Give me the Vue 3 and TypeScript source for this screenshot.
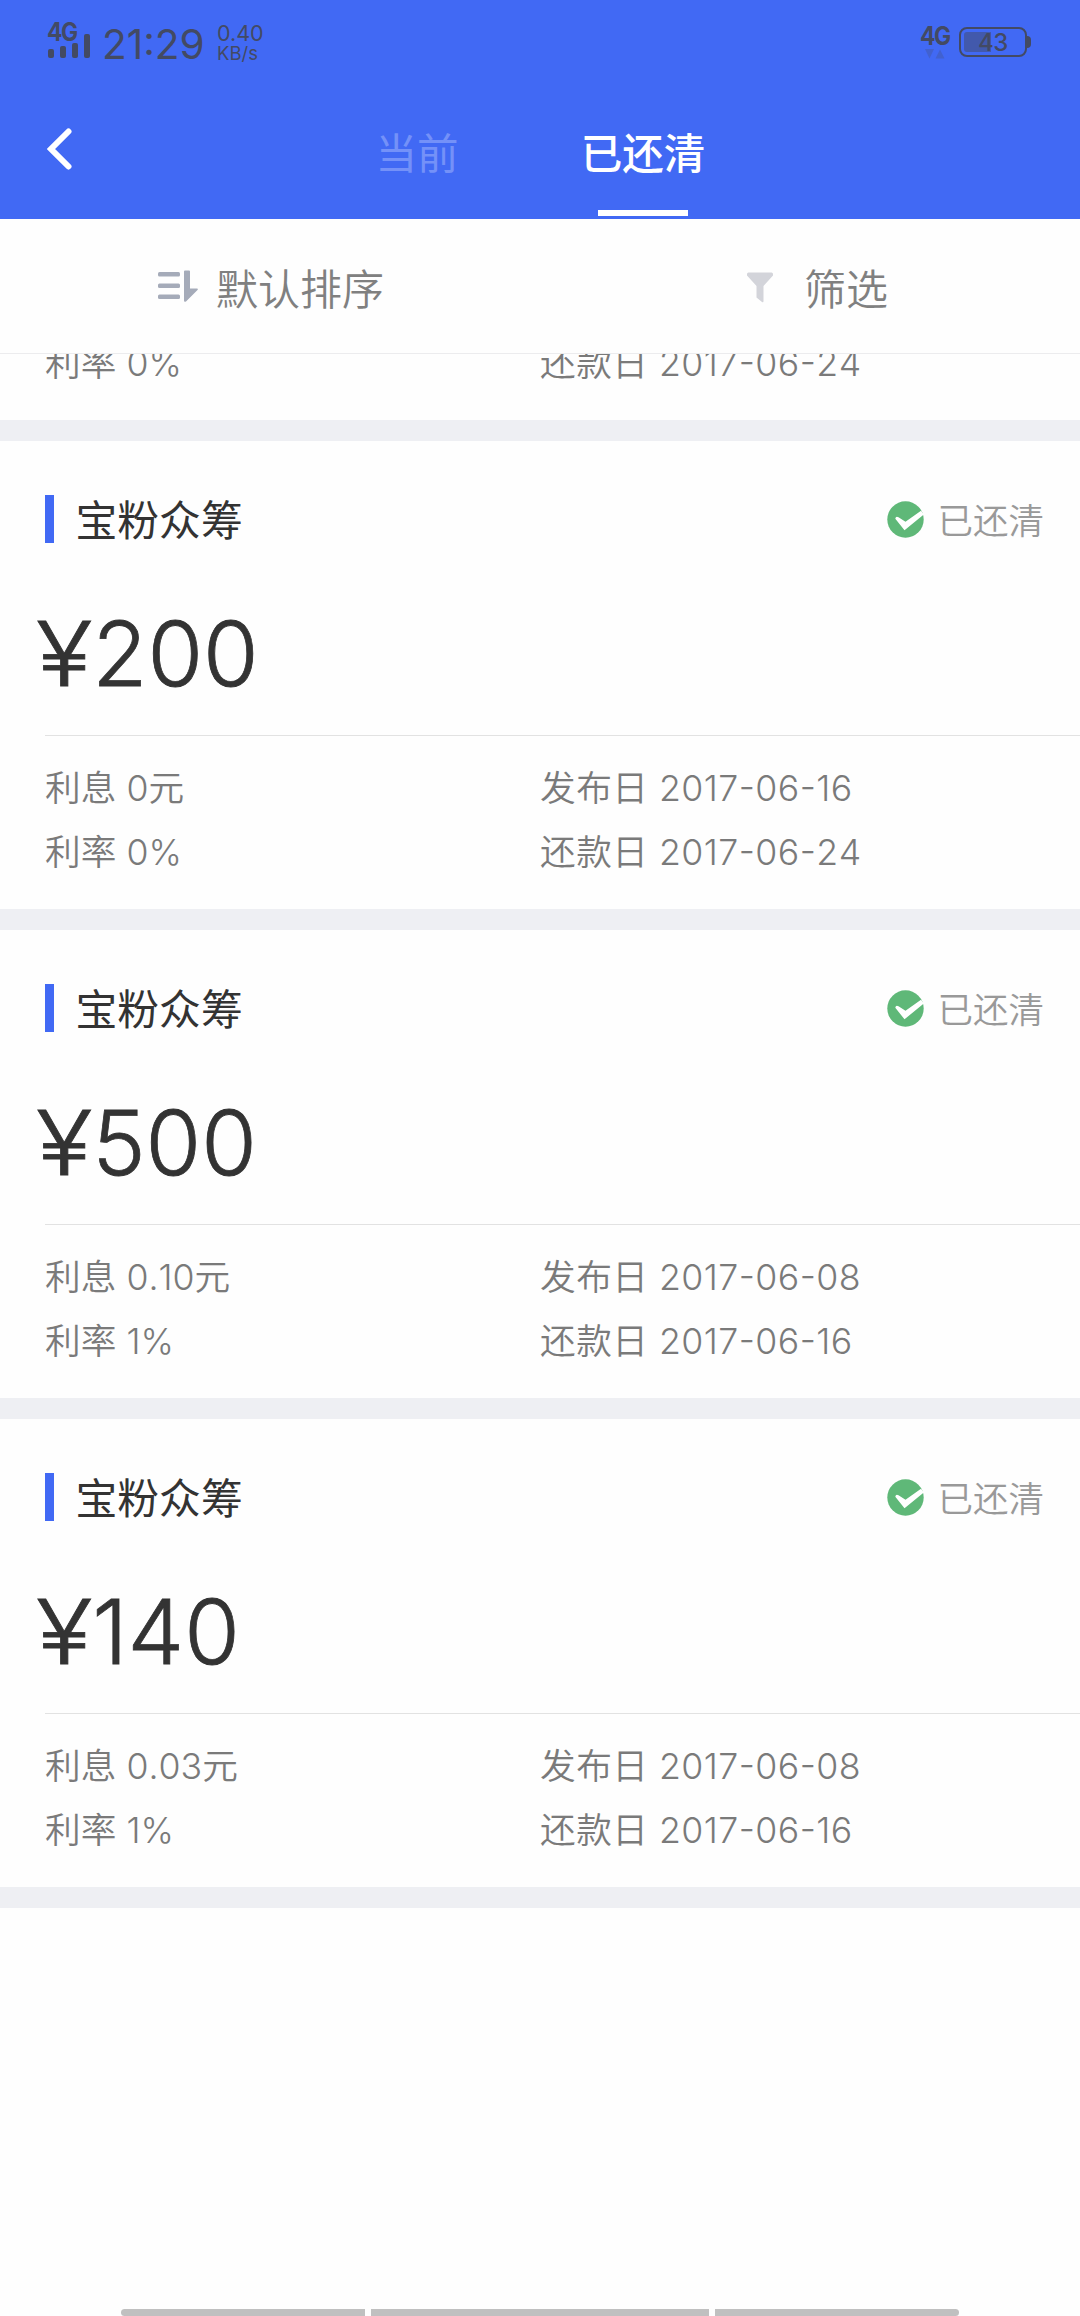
<script setup lang="ts">
interface Loan {
  title: string
  amount: string
  interest: string
  rate: string
  published: string
  due: string
}

const loans: Loan[] = [
  { title: '宝粉众筹', amount: '200', interest: '0元', rate: '0%', published: '2017-06-16', due: '2017-06-24' },
  { title: '宝粉众筹', amount: '500', interest: '0.10元', rate: '1%', published: '2017-06-08', due: '2017-06-16' },
  { title: '宝粉众筹', amount: '140', interest: '0.03元', rate: '1%', published: '2017-06-08', due: '2017-06-16' },
]
</script>

<template>
  <div class="screen">
    <header class="top">
      <div class="status">
        <div class="signal">
          <span class="net">4G</span>
          <svg width="42" height="24" viewBox="0 0 42 24">
            <rect x="0" y="15" width="6" height="9" rx="2" />
            <rect x="12" y="12" width="6" height="12" rx="2" />
            <rect x="24" y="9" width="6" height="15" rx="2" />
            <rect x="36" y="0" width="6" height="24" rx="2" />
          </svg>
        </div>
        <span class="time">21:29</span>
        <div class="speed"><span class="num">0.40</span><span class="unit">KB/s</span></div>
        <div class="data">
          <span class="net">4G</span>
          <svg width="20" height="10" viewBox="0 0 20 10"><path d="M0 0H9L4.500 9.500ZM10.500 9.500L15 0.500L19.500 9.500Z" /></svg>
        </div>
        <div class="battery"><span class="level"></span><span class="pct">43</span><span class="nub"></span></div>
      </div>
      <nav class="nav">
        <svg class="back" width="26" height="44" viewBox="0 0 26 44"><path d="M21.500 4.500L4 22L21.500 39.500" /></svg>
        <div class="tabs">
          <span class="tab">当前</span>
          <span class="tab active">已还清</span>
        </div>
      </nav>
    </header>

    <div class="filters">
      <div class="filter sort">
        <svg width="40" height="32" viewBox="0 0 40 32" fill="#a5abb9">
          <rect x="0" y="2" width="22" height="4.500" rx="1.500" />
          <rect x="0" y="13.500" width="22" height="4.500" rx="1.500" />
          <rect x="0" y="24.500" width="22" height="4.500" rx="1.500" />
          <path d="M27 0.500H31Q32 0.500 32 1.500V18.500H39Q40.500 19 39.500 20L28 31.500Q26 32.500 26 30.500V1.500Q26 0.500 27 0.500Z" />
        </svg>
        <span>默认排序</span>
      </div>
      <div class="filter pick">
        <svg width="26" height="31" viewBox="0 0 26 31" fill="#d3d4da">
          <path d="M1.500 0.500H24.500Q26 0.500 26 2V3.500L16.500 14V29Q16.500 31 15 30L9.500 25.500V14L0 3.500V2Q0 0.500 1.500 0.500Z" />
        </svg>
        <span>筛选</span>
      </div>
    </div>

    <main>
      <section class="tail">
        <div class="row"><span>利率 0%</span><span class="date">还款日 2017-06-24</span></div>
      </section>
      <section v-for="(loan, i) in loans" :key="i" class="card">
        <div class="head">
          <i class="mark"></i>
          <h2>{{ loan.title }}</h2>
          <svg width="37" height="37" viewBox="0 0 37 37">
            <circle cx="18.500" cy="18.500" r="18.200" fill="#5fb878" />
            <path d="M8.300 17.800Q8.800 14.800 11.500 16.300L18.500 20.800L34 9.800L36.800 13.500L17.500 29.300Z" fill="#fff" />
          </svg>
          <span class="state">已还清</span>
        </div>
        <div class="amount"><span class="yen">¥</span>{{ loan.amount }}</div>
        <div class="details">
          <div class="row"><span>利息 {{ loan.interest }}</span><span class="date">发布日 {{ loan.published }}</span></div>
          <div class="row"><span>利率 {{ loan.rate }}</span><span class="date">还款日 {{ loan.due }}</span></div>
        </div>
      </section>
    </main>

    <footer class="gesture"><i class="left"></i><i class="mid"></i><i class="right"></i></footer>
  </div>
</template>

<style>
body {
  margin: 0;
  background: #fff;
}
</style>

<style scoped>
.screen {
  display: flex;
  flex-direction: column;
  width: 1080px;
  height: 2316px;
  overflow: hidden;
  background: #fefefe;
  font-family: Inter, "Noto Sans CJK SC", sans-serif;
}
svg {
  display: block;
  flex: none;
}
.top {
  height: 219px;
  background: #4169f4;
}
.status {
  display: flex;
  height: 84px;
  color: #434a63;
}
.status svg {
  fill: #434a63;
}
.net {
  display: block;
  font-size: 25px;
  line-height: 24px;
  font-weight: 700;
  letter-spacing: -1.5px;
  transform: scaleX(0.91);
  transform-origin: left;
}
.signal {
  width: 42px;
  padding: 20px 0 0 48px;
}
.signal svg {
  margin-top: -10px;
}
.signal .net {
  margin-left: -1px;
}
.time {
  margin: 20px 0 0 12px;
  width: 104px;
  font-size: 40.5px;
  line-height: 49px;
  white-space: nowrap;
}
.speed {
  display: flex;
  flex-direction: column;
  margin: 21px 0 0 11px;
  width: 60px;
}
.num {
  font-size: 21.5px;
  line-height: 24px;
}
.unit {
  font-size: 18.5px;
  line-height: 17px;
}
.data {
  margin: 24px 0 0 643px;
  width: 30px;
}
.data svg {
  margin: 1px 0 0 5px;
  opacity: 0.25;
}
.battery {
  position: relative;
  box-sizing: border-box;
  width: 68px;
  height: 30px;
  margin: 27px 0 0 9px;
  border: 2px solid #434a63;
  border-radius: 8px;
}
.level {
  position: absolute;
  left: 3px;
  top: 3px;
  width: 27px;
  height: 20px;
  border-radius: 3px 0 0 3px;
  background: #434a63;
  opacity: 0.5;
}
.pct {
  position: absolute;
  left: 17px;
  top: 1px;
  font-size: 24px;
  line-height: 25px;
  font-weight: 500;
  letter-spacing: -0.5px;
}
.nub {
  position: absolute;
  left: 66px;
  top: 7px;
  width: 4px;
  height: 12px;
  border-radius: 0 4px 4px 0;
  background: #434a63;
}
.nav {
  display: flex;
  height: 135px;
}
.back {
  margin: 43px 0 0 47px;
  fill: none;
  stroke: #fff;
  stroke-width: 6px;
  stroke-linecap: round;
}
.tabs {
  display: flex;
  gap: 136px;
  padding-left: 299px;
}
.tab {
  box-sizing: border-box;
  height: 135px;
  width: 90px;
  display: flex;
  flex-direction: column;
  align-items: center;
  padding-top: 40px;
  font-size: 41.5px;
  line-height: 60px;
  white-space: nowrap;
  color: #7491f8;
}
.tab.active {
  color: #fff;
  font-weight: 500;
}
.tab.active::after {
  content: "";
  width: 90px;
  height: 6px;
  margin-top: 26px;
  background: #fff;
}
.filters {
  display: flex;
  height: 134px;
  border-bottom: 1px solid #ececee;
  font-size: 42px;
  font-weight: 350;
  line-height: 60px;
  color: #808080;
}
.filter {
  display: flex;
  width: 540px;
}
.filter span {
  margin-top: 41px;
}
.sort svg {
  margin: 51px 18px 0 158px;
}
.pick svg {
  margin: 53px 31px 0 207px;
}
.tail {
  display: flex;
  align-items: flex-end;
  box-sizing: border-box;
  height: 87px;
  padding: 0 0 25px 45px;
  border-bottom: 21px solid #eeeff3;
  overflow: hidden;
}
.row {
  display: flex;
  height: 64px;
  line-height: 64px;
  font-size: 35.7px;
  font-weight: 350;
  font-kerning: none;
  font-feature-settings: "case" 1;
  color: #7a7a7a;
}
.row span {
  width: 495px;
  white-space: nowrap;
}
.row .date {
  letter-spacing: 0.45px;
}
.card {
  height: 468px;
  border-bottom: 21px solid #eeeff3;
}
.head {
  display: flex;
  align-items: center;
  padding: 48px 36px 0 45px;
  height: 60px;
}
.mark {
  width: 9px;
  height: 48px;
  background: #4169f4;
}
h2 {
  flex: 1;
  margin: 3px 0 0 21.5px;
  font-size: 41.8px;
  line-height: 60px;
  font-weight: 400;
  color: #333;
}
.state {
  margin: 5px 0 0 13px;
  font-size: 35.5px;
  line-height: 60px;
  font-weight: 350;
  color: #999;
}
.amount {
  height: 186px;
  padding-left: 35.5px;
  font-size: 90px;
  line-height: 210px;
  font-weight: 300;
  font-kerning: none;
  -webkit-text-stroke: 0.8px #333;
  color: #333;
}
.yen {
  display: inline-block;
  margin-right: 8px;
  transform: scaleX(1.16);
  transform-origin: left;
}
.details {
  margin-left: 45px;
  padding-top: 20px;
  border-top: 1px solid #e2e2e2;
}
.gesture {
  display: flex;
  gap: 6px;
  margin-top: auto;
  padding-left: 121px;
}
.gesture i {
  height: 7px;
  background: #c0c0c0;
}
.left {
  width: 244px;
  border-radius: 4px 0 0 4px;
}
.mid {
  width: 338px;
}
.right {
  width: 244px;
  border-radius: 0 4px 4px 0;
}
</style>
